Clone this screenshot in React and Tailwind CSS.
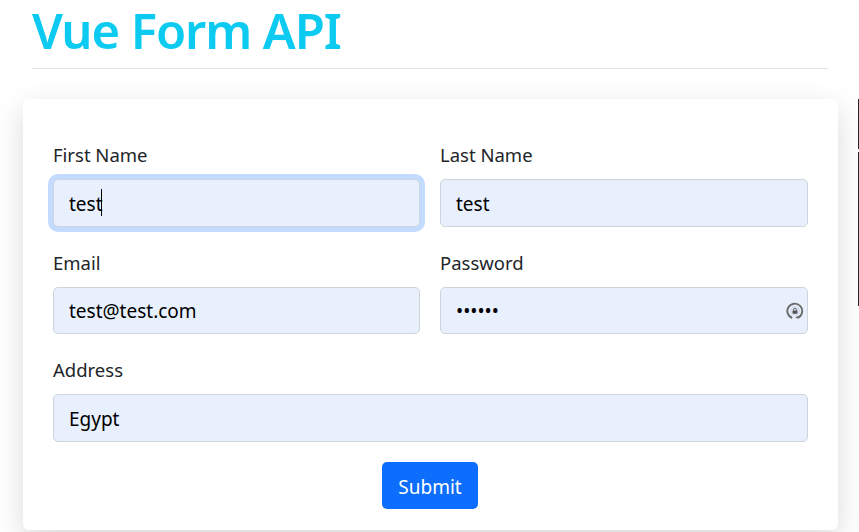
import React from 'react'

const inputClass =
  'block w-full h-[47.5px] px-[15px] pt-[2px] bg-[#e8f0fe] border border-[#ced4da] rounded-[5px] text-[19px] text-black outline-none'

const Field = ({ label, className = '', children }) => (
  <div className={className}>
    <label className="block h-[30px] pt-px leading-[30px] mb-2.5 text-[18.5px] text-[#212529]">{label}</label>
    <div className="relative">{children}</div>
  </div>
)

const PasswordIcon = () => (
  <svg viewBox="0 0 18 18" className="absolute right-[4px] top-[15px] w-[18px] h-[18px]" fill="none">
    <path d="M6.2 16A7.4 7.4 0 1 1 12.6 15.4" stroke="#6a6a6a" strokeWidth="1.9" />
    <path d="M13.8 13.2l-1.2 3.6 -3.6-1.2z" fill="#6a6a6a" />
    <circle cx="9" cy="9" r="5" fill="#6a6a6a" opacity="0.12" />
    <rect x="6.6" y="8.6" width="4.8" height="3.2" rx="0.5" fill="#555555" />
    <path d="M7.6 8.8V7.6a1.4 1.4 0 0 1 2.8 0v1.2" stroke="#555555" strokeWidth="0.8" />
  </svg>
)

export default function App() {
  return (
    <div className="flex w-[859px] h-[532px] overflow-hidden bg-white font-['Noto_Sans','Open_Sans',sans-serif]">
      <div className="w-[858px] shrink-0 pl-[23px] pr-5">
        <div className="ml-[9px] mr-2.5 h-[69px] border-b border-[#dee2e6]">
          <h1 className="h-[60px] leading-[60px] text-[49px] font-semibold tracking-[-1.1px] text-[#0dcaf0]">Vue Form API</h1>
        </div>

        <form className="mt-[30px] h-[431px] bg-white rounded-[6px] shadow-[0_10px_30px_rgba(0,0,0,0.15)] pt-10 px-[30px]">
          <div className="grid grid-cols-[367px_368px] gap-x-5 gap-y-5">
            <Field label="First Name">
              <input
                readOnly
                value="test"
                className={`${inputClass} border-[#86b7fe] ring-[5px] ring-[#c2dbfe]`}
              />
              <span className="absolute left-[48px] top-[10px] w-px h-[27px] bg-black"></span>
            </Field>
            <Field label="Last Name">
              <input readOnly value="test" className={inputClass} />
            </Field>
            <Field label="Email">
              <input readOnly value="test@test.com" className={inputClass} />
            </Field>
            <Field label="Password">
              <input readOnly type="password" value="123456" className={inputClass} />
              <PasswordIcon />
            </Field>
            <Field label="Address" className="col-span-2">
              <input readOnly value="Egypt" className={inputClass} />
            </Field>
          </div>
          <div className="flex justify-center mt-5 pr-px">
            <button
              type="button"
              className="w-24 h-[47.5px] pt-[3px] bg-[#0d6efd] text-white text-[19px] rounded-[5px]"
            >
              Submit
            </button>
          </div>
        </form>
      </div>

      <div className="w-px pt-[99px] flex flex-col gap-[3px]">
        <div className="h-[50px] bg-[#212529]"></div>
        <div className="h-[154px] bg-[#212529]"></div>
      </div>
    </div>
  )
}
